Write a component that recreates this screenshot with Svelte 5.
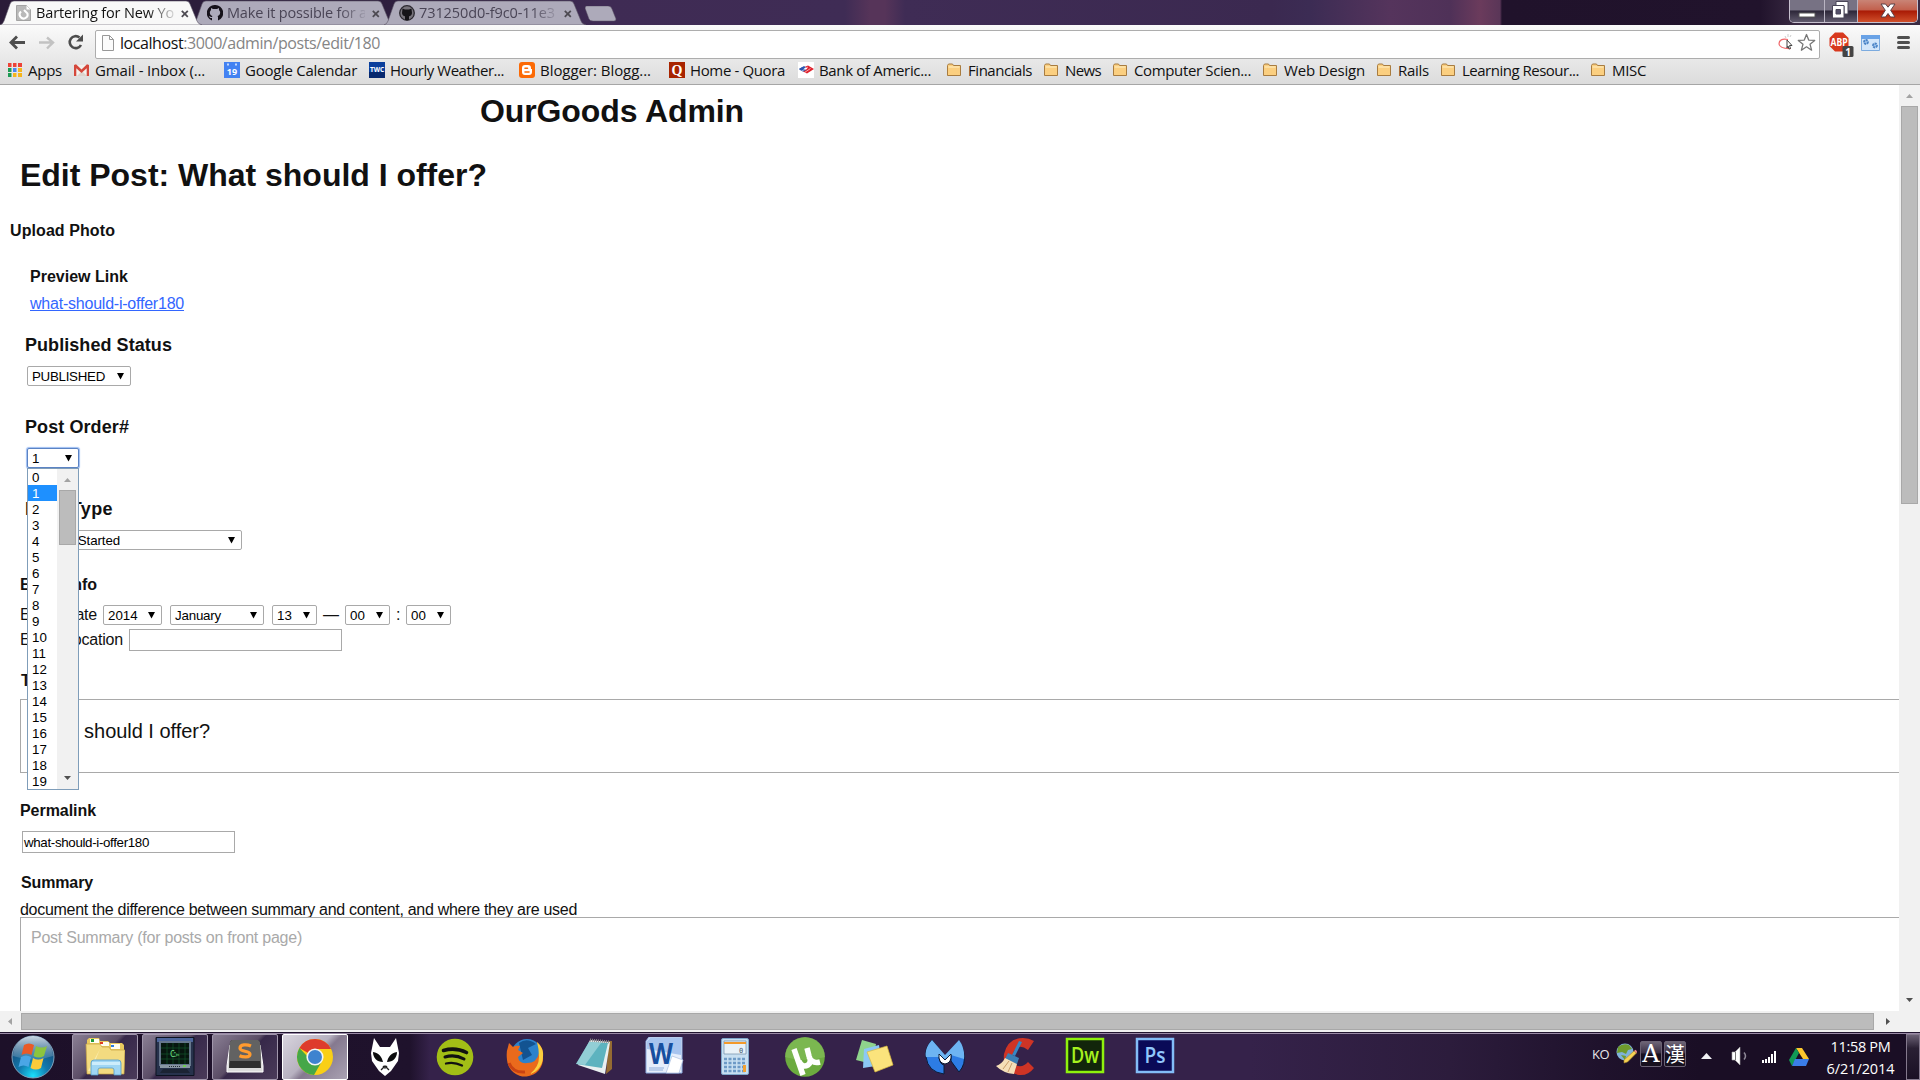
<script>
  // Spreads a label's letters so that it takes exactly the given width.
  function fit(node, width) {
    if (!width) return;
    const natural = node.getBoundingClientRect().width;
    node.style.letterSpacing = (width - natural) / node.textContent.length + 'px';
  }

  const tabs = [
    { title: 'Bartering for New Yo', w: 138, icon: 'page', active: true },
    { title: 'Make it possible for a', w: 140, icon: 'github' },
    { title: '731250d0-f9c0-11e3', w: 136, icon: 'octo' }
  ];

  const bookmarks = [
    { label: 'Apps', icon: 'apps', slot: 66, w: 34 },
    { label: 'Gmail - Inbox (...', icon: 'gmail', slot: 150, w: 110 },
    { label: 'Google Calendar', icon: 'cal', slot: 145, w: 112 },
    { label: 'Hourly Weather...', icon: 'twc', slot: 150, w: 114 },
    { label: 'Blogger: Blogg...', icon: 'blogger', slot: 150, w: 111 },
    { label: 'Home - Quora', icon: 'quora', slot: 129, w: 95 },
    { label: 'Bank of Americ...', icon: 'bofa', slot: 149, w: 112 },
    { label: 'Financials', icon: 'folder', slot: 97, w: 64 },
    { label: 'News', icon: 'folder', slot: 69, w: 36 },
    { label: 'Computer Scien...', icon: 'folder', slot: 150, w: 117 },
    { label: 'Web Design', icon: 'folder', slot: 114, w: 81 },
    { label: 'Rails', icon: 'folder', slot: 64, w: 31 },
    { label: 'Learning Resour...', icon: 'folder', slot: 150, w: 117 },
    { label: 'MISC', icon: 'folder', slot: 70, w: 34 }
  ];

  const orders = Array.from({ length: 20 }, (_, i) => i);

  const taskbar = [
    { id: 'explorer', state: 'open' },
    { id: 'terminal', state: 'open' },
    { id: 'sublime', state: 'open' },
    { id: 'chrome', state: 'open focus' },
    { id: 'foobar' }, { id: 'spotify' }, { id: 'firefox' }, { id: 'notepad' },
    { id: 'word' }, { id: 'calc' }, { id: 'utorrent' }, { id: 'sticky' },
    { id: 'malware' }, { id: 'ccleaner' }, { id: 'dw' }, { id: 'ps' }
  ];
</script>

{#snippet select(cls, value, w)}
  <div class="select {cls}">
    <span use:fit={w}>{value}</span>
    <svg class="arrow" width="7" height="7" viewBox="0 0 7 7"><path d="M0 0h7L3.500 6.500z" /></svg>
  </div>
{/snippet}

{#snippet small(icon)}
  <svg class="ico" width="16" height="16" viewBox="0 0 16 16">
    {#if icon === 'apps'}
      <path fill="#ed4337" d="M0 1h4v4H0zM5 1h4v4H5zM10 1h4v4h-4z" />
      <path fill="#1e9b54" d="M0 6h4v4H0z" /><path fill="#4a87ee" d="M5 6h4v4H5z" /><path fill="#f5b51c" d="M10 6h4v4h-4z" />
      <path fill="#1e9b54" d="M0 11h4v4H0z" /><path fill="#f5b51c" d="M5 11h4v4H5zM10 11h4v4h-4z" />
      <path stroke="#e6e6e6" d="M4 0v16M9 0v16M0 5.500h16M0 10.500h16" />
    {:else if icon === 'gmail'}
      <path fill="#f3f1ee" d="M1 3h13v11H1z" /><path fill="#ddd3cd" d="M3 14l5-5 5 5z" />
      <path fill="#d5483c" d="M0 3l2-.8 5.500 5.200 5.500-5.200 2 .8v11h-2.300V6.300L7.500 11 2.300 6.300V14H0z" />
    {:else if icon === 'cal'}
      <path fill="#4382f2" d="M0 0h16v16H0z" /><path fill="#c4d8fc" d="M3 1.500h2v2H3zM11 1.500h2v2h-2z" />
      <text x="8" y="12.500" font-size="9" font-weight="bold" text-anchor="middle" fill="#fff">19</text>
    {:else if icon === 'twc'}
      <path fill="#0b3f9c" d="M0 0h16v16H0z" /><path fill="#06286f" d="M0 10h16v6H0z" />
      <text x="8" y="10" font-size="6.500" font-weight="bold" text-anchor="middle" fill="#fff">TWC</text>
    {:else if icon === 'blogger'}
      <rect width="16" height="16" rx="3" fill="#fc6a05" />
      <path fill="#fff" d="M3 6a3 3 0 0 1 3-3h3a3 3 0 0 1 3 3v1h1v3a3 3 0 0 1-3 3H6a3 3 0 0 1-3-3z" />
      <path stroke="#fc6a05" stroke-width="1.600" stroke-linecap="round" d="M6 6.200h2.500M6 10h4" />
    {:else if icon === 'quora'}
      <path fill="#a82400" d="M0 0h16v16H0z" />
      <text x="8" y="13" font-size="14" font-weight="bold" text-anchor="middle" fill="#fff" class="serif">Q</text>
    {:else if icon === 'bofa'}
      <path fill="#fff" d="M0 0h16v16H0z" />
      <path fill="#2d57b0" d="M1 7l5-3 2 1.200-5 3.200z" /><path fill="#e0222d" d="M7 4.800l3-1.300 6 3.500-7 4.500-4-2 4.500-3z" />
      <path fill="#2d57b0" d="M1 7l3-1.700 4 2.700-3 1.800z" />
      <path stroke="#fff" stroke-width=".6" d="M4 9l6-4M6.500 10.500l6-4" />
    {:else if icon === 'folder'}
      <path d="M.5 13.500v-10l1-1.500h4l1 1.500h7v10z" fill="#fbcf80" stroke="#a87c40" />
      <path d="M1.500 5h11" stroke="#fff0c4" />
    {:else if icon === 'page'}
      <path d="M.5.500h10l4 4v11H.5z" fill="#b9b9b9" stroke="#a3a3a3" /><path d="M10.500.500l4 4h-4z" fill="#fff" />
      <path d="M5 6.500a4 4 0 1 0 6.500 2L8 5" fill="none" stroke="#fff" stroke-width="2" />
    {:else if icon === 'github'}
      <path fill="#16121a" d="M8 0a8 8 0 0 0-3 15.500V13c-2 .4-2.500-.8-3-2 1.300 0 1.500 1.300 3 1l.4-1C3.500 10.500 2.700 9 2.900 6.800L4 4.900 4 3l2 .9h4L12 3v1.900l1.100 1.900c.2 2.200-.6 3.700-2.500 4.200l.4 1v3.500A8 8 0 0 0 8 0z" />
    {:else if icon === 'octo'}
      <circle cx="8" cy="8" r="7.300" fill="#77737b" stroke="#2c2930" stroke-width="1.300" />
      <path fill="#151317" d="M3.500 3.500l2.500 1h4l2.500-1 .5 4.500c0 2-1.500 3-3 3.200V15H6v-3.800C4.500 11 3 10 3 8z" />
    {/if}
  </svg>
{/snippet}

{#snippet app(id)}
  <svg width="40" height="40" viewBox="0 0 40 40">
    {#if id === 'explorer'}
      <path d="M2 7V3l2-2h10l1 3h8l2 2h12l2 2v28H2z" fill="#e9c95e" />
      <path d="M5 2h9v4H5zM15 5h9v4h-9zM26 7h9v5h-9z" fill="#fffdf0" />
      <path d="M6 2h3v3H6z" fill="#1d9b38" /><path d="M15 5h3v2h-3z" fill="#e13b22" /><path d="M26 8h3v2h-3z" fill="#2a7ce0" />
      <path d="M1 7h14l2 3h7l2 3h14l-1 24H2z" fill="#f3db80" stroke="#c7a544" stroke-width=".7" />
      <path d="M3 34L15 12l-9 22z" fill="#fdf3bc" opacity=".7" />
      <path d="M6 26q0-3 3-3h24q3 0 3 3v12h-7v-5q0-2-2-2H15q-2 0-2 2v5H6z" fill="#9fd6f3" stroke="#539cc9" stroke-width=".8" />
      <path d="M7 25h28v3H7z" fill="#d8f2fd" opacity=".8" />
    {:else if id === 'terminal'}
      <path d="M1 .5h38v38H1z" fill="#27324c" stroke="#0c1220" />
      <path d="M2 1h36v4H2z" fill="#4d659b" /><path d="M4 4h32v25H4z" fill="#66768c" /><path d="M6 6h28v21H6z" fill="#07160f" />
      <path d="M12 6v21M18 6v21M24 6v21M30 6v21M6 11h28M6 17h28M6 22h28" stroke="#12532c" stroke-width=".7" />
      <text x="15" y="20" font-size="8" fill="#6ee387" class="mono" textLength="10">C:▹</text>
      <path d="M5 28h30v3H5z" fill="#8996a3" /><path d="M14 29.500h12" stroke="#242d38" stroke-dasharray="1 1" /><path d="M28 29h3" stroke="#6adc3d" stroke-width="1.500" />
      <path d="M8 32h24l3 4H5z" fill="#1b2333" />
    {:else if id === 'sublime'}
      <path d="M2 29L5 8h30l3 21v6H2z" fill="#dcdcdc" stroke="#fff" />
      <path d="M7 3h26l2 2 1 26H4L5 5z" fill="#303030" /><path d="M7 3h26l2 2 1 19H4L5 5z" fill="#626262" />
      <path d="M26 9c-4-1.800-11-1.800-11 2.200 0 4 10 2 10 6 0 3.600-7 3.200-10.500 1.500" fill="none" stroke="#ff9b2e" stroke-width="3.200" />
    {:else if id === 'chrome'}
      <circle cx="20" cy="20" r="18" fill="#f9cf16" />
      <path d="M20 20L4.400 11A18 18 0 0 1 36 12H20z" fill="#de3b2c" />
      <path d="M20 20h-7L4.400 11A18 18 0 0 0 19 38l8-14z" fill="#45a748" />
      <circle cx="20" cy="20" r="8.600" fill="#f4f6f4" /><circle cx="20" cy="20" r="7" fill="#3e83cf" />
    {:else if id === 'foobar'}
      <path d="M9 1l6 9h10l6-9 3 15-1 8-7 10-6 5-6-5-7-10-1-8z" fill="#fff" />
      <path d="M8 15c6 1 9 5 10 10-6 0-10-4-10-10zM32 15c-6 1-9 5-10 10 6 0 10-4 10-10z" fill="#0c0c0e" />
      <path d="M16 33l4-4 4 4M18 29l2 2 2-2" fill="none" stroke="#222" stroke-width="1.300" />
    {:else if id === 'spotify'}
      <circle cx="20" cy="20" r="18.300" fill="#a2be16" />
      <g fill="none" stroke="#111" stroke-linecap="round"><path d="M8.500 13.500q12-3.500 23 2" stroke-width="3.600" /><path d="M10 20q10-3 19 2" stroke-width="3" /><path d="M11 26.500q8-2 16 2" stroke-width="2.300" /></g>
    {:else if id === 'firefox'}
      <circle cx="22" cy="18" r="16" fill="#2c82cc" /><path d="M14 6q8-6 17 1l-8 4 4 7-9 5z" fill="#135391" />
      <path d="M3 10l1-4 4 4q3-2 7-1l-2 4 5 3-5 4q1 7 9 6 10 0 12-10 1-6-2-11 7 6 6 15A18 18 0 0 1 2 23Q1 15 3 10z" fill="#ea6a1c" />
      <path d="M32 5q7 6 6 15a18 18 0 0 1-13 17q9-7 9-17 0-8-2-15z" fill="#fbce3e" />
      <path d="M4 26q4 10 16 9" fill="none" stroke="#c94212" stroke-width="3" />
    {:else if id === 'notepad'}
      <path d="M34 4h3v28l-6 5z" fill="#946b32" /><path d="M15 3l20 2-5 32-27-9z" fill="#e9f0f0" />
      <path d="M14 5l19 1-6 25L1 27z" fill="#5db3bf" /><path d="M14 5l12 1L10 28l-9-1z" fill="#b6e0e4" opacity=".6" />
      <path d="M15 3l20 2" stroke="#8c8c8c" stroke-width="3" stroke-dasharray="1 1" />
    {:else if id === 'word'}
      <path d="M1 4l3-4h33v36H1z" fill="#e6eefb" stroke="#8cabdf" /><path d="M2 4l3-3h31v17L2 12z" fill="#a7c4ef" />
      <text x="4" y="27" font-size="29" font-weight="bold" fill="#174f9f" textLength="24" lengthAdjust="spacingAndGlyphs">W</text>
      <path d="M27 19l11 4-4 13H21z" fill="#fff" stroke="#a9bddf" stroke-width=".7" /><path d="M4 31h15M4 33h14" stroke="#90add9" />
    {:else if id === 'calc'}
      <rect x="6.500" y="1.500" width="27" height="36" rx="1.500" fill="#c7dff1" stroke="#7fa7ca" />
      <path d="M9 4h22v13H9z" fill="#e9f2f8" stroke="#718ea8" stroke-width=".7" /><path d="M9 5h22v2H9z" fill="#f39a2b" />
      <text x="24" y="16" font-size="7" fill="#41566b" class="mono">0</text>
      <path d="M9 22h22M9 26h22M9 30h22M9 34h22" stroke="#6d9ac6" stroke-width="2.400" stroke-dasharray="3 1.500" /><path d="M28 28h3v7h-3z" fill="#f2a233" />
    {:else if id === 'utorrent'}
      <circle cx="20" cy="20" r="19.800" fill="#6cab3f" /><path d="M0 20a20 20 0 0 1 40 0q-20 6-40 0z" fill="#86bf5b" opacity=".6" />
      <path d="M9 12l9 26M14 24q3 7 9 4 4-3 1-9l-2-8M24 20q3 7 11 5" fill="none" stroke="#fff" stroke-width="5.500" />
    {:else if id === 'sticky'}
      <path d="M7 3l14 4-4 20-16-4z" fill="#8fd48c" /><path d="M9 12l15-4 3 20-19 3z" fill="#8cc8f5" />
      <path d="M12 15l20-6 6 19-18 7z" fill="#fbe37c" stroke="#d9b93e" stroke-width=".7" />
    {:else if id === 'malware'}
      <path d="M7 3Q-1 12 1 20q2 15 18 17V28q-5-1-5-10l6 5 6-5v6l8 11q7-8 5-18-1-8-5-13l-14 15z" fill="#2d7ce4" stroke="#0b1c38" />
      <path d="M7 3Q-1 12 1 20h12l7 2 6-4 13 4Q40 11 34 3L20 18z" fill="#6db4f2" />
      <path d="M14 17l6 6 6-6q1 9-6 10-7-1-6-10z" fill="#fff" stroke="#0b1c38" />
    {:else if id === 'ccleaner'}
      <path d="M39 4L33 13Q24 6 19 14q-6 12 4 15 6 1 10-4l6 6q-6 8-15 7Q7 34 9 17 13 1 28 1q6 0 11 3z" fill="#cf3425" />
      <path d="M24 4l3 1-7 14-3-1z" fill="#3787c4" /><path d="M13 16l11 5-2 6-12-5z" fill="#3c7fb4" />
      <path d="M10 21l12 6q-2 6-3 10Q8 36 1 29q6-2 9-8z" fill="#f5dfb8" /><path d="M8 32l6-8M13 35l4-9" stroke="#c99d69" />
    {:else if id === 'dw' || id === 'ps'}
      <rect x="2" y="2" width="36" height="33" class={id} stroke-width="2.500" />
      <text x="20" y="26" font-size="21" font-weight="600" text-anchor="middle" textLength={id === 'dw' ? 28 : 21} lengthAdjust="spacingAndGlyphs" fill={id === 'dw' ? '#a6f21e' : '#90c6fb'}>{id === 'dw' ? 'Dw' : 'Ps'}</text>
    {/if}
  </svg>
{/snippet}

<div class="screen">
  <header class="tabstrip">
    {#each tabs as tab}
      <div class="tab" class:active={tab.active}>
        <svg class="shape" width="206" height="25" viewBox="0 0 206 25">
          <path d="M0 25Q3 24 4 21L10 4Q11 1 14 1H186Q189 1 190 4L197 21Q198 24 202 25z" />
        </svg>
        {@render small(tab.icon)}
        <span class="name"><span use:fit={tab.w}>{tab.title}</span></span>
        <svg class="x" width="8" height="8" viewBox="0 0 8 8"><path d="M.8.8l6 6m0-6l-6 6" /></svg>
      </div>
    {/each}
    <svg class="newtab" width="32" height="16" viewBox="0 0 32 16"><path d="M1 0h22q3 0 4 3l4 10q0 2-2 2H8q-3 0-4-2L0 2z" /></svg>
    <div class="controls">
      <div class="min"><svg width="18" height="6" viewBox="0 0 18 6"><path d="M1 1h16v4H1z" fill="#fff" stroke="#555" /></svg></div>
      <div class="max"><svg width="18" height="18" viewBox="0 0 18 18"><path d="M5 .5h12v12.500h-4V5H5z" fill="#fff" stroke="#4a4658" /><path d="M1.500 4.500h11.500v12.500H1.500z" fill="#fff" stroke="#4a4658" /><path d="M5 8.500h4.500v4.500H5z" fill="#55516a" stroke="#4a4658" /></svg></div>
      <div class="close"><svg width="16" height="15" viewBox="0 0 16 15"><path d="M1 1h4.500L8 4.200 10.500 1H15l-4.300 6.300L15 14h-4.500L8 10.500 5.500 14H1l4.300-6.700z" fill="#fff" stroke="#5b4046" /></svg></div>
    </div>
  </header>

  <div class="toolbar">
    <svg width="95" height="34" viewBox="0 0 95 34" fill="none">
      <path d="M17 11.500l-6 6 6 6M11 17.500h14" stroke="#4d4d4d" stroke-width="2.800" />
      <path d="M47 12.500l6 5-6 6M53 17.500H39" stroke="#c2c2c2" stroke-width="2.400" />
      <path d="M81 20a6 6 0 1 1-1.500-7.500" stroke="#4d4d4d" stroke-width="2.600" /><path d="M83 9.500v7h-7z" fill="#4d4d4d" />
    </svg>
    <div class="omnibox">
      <svg width="12" height="16" viewBox="0 0 12 16"><path d="M.5.500h7l4 4v11H.5zM7.500.500v4h4" fill="#fbfbfb" stroke="#989898" /></svg>
      <span class="url" use:fit={260}><b>localhost</b>:3000/admin/posts/edit/180</span>
      <svg class="pick" width="17" height="18" viewBox="0 0 17 18"><path d="M10 5.500Q1 4 1 10q1 5 12 4.500" fill="none" stroke="#f0686b" stroke-width="1.200" /><path d="M7 2l1 2M10 0v3M13 1l-1 2" stroke="#ccc" /><path d="M9 6l5 5.500h-2.500l1 3-1.500.500-1-3L9 14z" fill="#fff" stroke="#444" /></svg>
      <svg width="19" height="19" viewBox="0 0 19 19"><path d="M9.500 1.500l2.200 5.600 6 .3-4.700 3.800 1.600 6-5.100-3.400-5.100 3.400 1.600-6L1.300 7.400l6-.3z" fill="#fff" stroke="#777" stroke-width="1.300" stroke-linejoin="round" /></svg>
    </div>
    <svg class="ext" width="100" height="34" viewBox="0 0 100 34">
      <path d="M15 7.500h8l5.500 5.500v8L23 26.500h-8L9.500 21v-8z" fill="#d8391e" />
      <text x="19" y="20.500" font-size="10.500" font-weight="bold" text-anchor="middle" textLength="17" lengthAdjust="spacingAndGlyphs" fill="#fff">ABP</text>
      <rect x="22.500" y="21" width="11" height="11" rx="1.500" fill="#444" /><text x="28" y="30.500" font-size="10" font-weight="bold" text-anchor="middle" fill="#fff">1</text>
      <path d="M41.500 10.500h18v15h-18z" fill="#d3e6fa" stroke="#7cabdf" /><path d="M41 10h19v4H41z" fill="#69a2e6" />
      <circle cx="46" cy="17" r="2" fill="#9bc0ea" stroke="#4b84c6" stroke-width="1.800" stroke-dasharray="2 .7" /><circle cx="55" cy="20.500" r="2" fill="#9bc0ea" stroke="#4b84c6" stroke-width="1.800" stroke-dasharray="2 .7" />
      <path d="M78.500 12.500h10M78.500 17.500h10M78.500 22.500h10" stroke="#505050" stroke-width="3" stroke-linecap="round" />
    </svg>
  </div>

  <nav class="bookmarks">
    {#each bookmarks as b}
      <div class="bookmark" style:width="{b.slot}px">
        {@render small(b.icon)}<span use:fit={b.w}>{b.label}</span>
      </div>
    {/each}
  </nav>

  <div class="viewport">
    <main>
      <h1 class="brand"><span use:fit={264}>OurGoods Admin</span></h1>
      <h1><span use:fit={467}>Edit Post: What should I offer?</span></h1>
      <h4 class="upload"><span use:fit={105}>Upload Photo</span></h4>
      <h4 class="preview"><span use:fit={98}>Preview Link</span></h4>
      <div class="link"><a href="#preview" use:fit={154}>what-should-i-offer180</a></div>

      <h3 class="status"><span use:fit={147}>Published Status</span></h3>
      {@render select('published', 'PUBLISHED', 73)}
      <h3><span use:fit={104}>Post Order#</span></h3>
      <div class="combo">
        {@render select('order', '1')}
        <div class="popup">
          <ul>
            {#each orders as n}<li class:picked={n === 1}>{n}</li>{/each}
          </ul>
          <div class="mini-bar">
            <svg width="7" height="4" viewBox="0 0 7 4"><path d="M0 4h7L3.500 0z" fill="#a3a3a3" /></svg>
            <div class="mini-thumb"></div>
            <svg class="down" width="7" height="4" viewBox="0 0 7 4"><path d="M0 0h7L3.500 4z" fill="#505050" /></svg>
          </div>
        </div>
      </div>
      <h3><span use:fit={88}>Post Type</span></h3>
      {@render select('type', 'Getting Started', 88)}

      <h4 class="event"><span use:fit={77}>Event Info</span></h4>
      <div class="row date">
        <span class="lab" use:fit={77}>Event Date</span>
        {@render select('year', '2014')}
        {@render select('month', 'January', 46)}
        {@render select('two', '13')}
        <span class="dash">—</span>
        {@render select('two', '00')}
        <span class="colon">:</span>
        {@render select('two', '00')}
      </div>
      <div class="row place">
        <span class="lab" use:fit={103}>Event Location</span>
        <div class="input"></div>
      </div>

      <h4 class="title"><span>Title</span></h4>
      <div class="area heading"><span use:fit={178}>What should I offer?</span></div>
      <h4 class="perma"><span use:fit={76}>Permalink</span></h4>
      <div class="input perma-input"><span use:fit={125}>what-should-i-offer180</span></div>
      <h4 class="summary"><span use:fit={72}>Summary</span></h4>
      <p><span use:fit={557}>document the difference between summary and content, and where they are used</span></p>
      <div class="area text"><span use:fit={271}>Post Summary (for posts on front page)</span></div>
    </main>
    <div class="vbar">
      <svg width="7" height="4" viewBox="0 0 7 4"><path d="M0 4h7L3.500 0z" fill="#a3a3a3" /></svg>
      <div class="vthumb"></div>
      <svg class="down" width="7" height="4" viewBox="0 0 7 4"><path d="M0 0h7L3.500 4z" fill="#505050" /></svg>
    </div>
  </div>
  <div class="hbar">
    <svg width="4" height="7" viewBox="0 0 4 7"><path d="M4 0v7L0 3.500z" fill="#a3a3a3" /></svg>
    <div class="hthumb"></div>
    <svg width="4" height="7" viewBox="0 0 4 7"><path d="M0 0v7l4-3.500z" fill="#505050" /></svg>
  </div>

  <footer class="taskbar">
    <svg class="start" width="44" height="44" viewBox="0 0 44 44">
      <defs>
        <radialGradient id="orb" cx=".5" cy=".95" r=".9"><stop offset="0" stop-color="#19dffc" /><stop offset=".4" stop-color="#1279ad" /><stop offset="1" stop-color="#173f6c" /></radialGradient>
        <linearGradient id="shine" x2="0" y2="1"><stop offset="0" stop-color="#dfeaf2" stop-opacity=".9" /><stop offset="1" stop-color="#8fb0c8" stop-opacity=".25" /></linearGradient>
      </defs>
      <circle cx="22" cy="22" r="21" fill="url(#orb)" stroke="#7fa3bd" />
      <path d="M2 21a20 20 0 0 1 40 0q-20 7-40 0z" fill="url(#shine)" />
      <path d="M13 10q5-3 10 0l-2.500 10q-5-3-10 0z" fill="#ea5a27" /><path d="M25 11q6 3 11 0l-3 10q-5 3-10.500 0z" fill="#8cc43e" />
      <path d="M10 22q5-3 10 0l-2.500 10q-5-3-10 0z" fill="#4aa6e6" /><path d="M22 23q5 3 10.500 0L30 33q-5 3-10.500 0z" fill="#fccb3a" />
    </svg>
    {#each taskbar as t}
      <div class="task {t.state ?? ''}">{@render app(t.id)}</div>
    {/each}
    <div class="tray">
      <span class="lang" use:fit={17}>KO</span>
      <svg class="globe" width="21" height="21" viewBox="0 0 21 21"><circle cx="9" cy="9" r="8.500" fill="#7fb2d8" /><path d="M2 4q5-4 11-2l3 4-4 1-2 4-4-2-5 1zM5 12l5 1-1 4z" fill="#6f9a2c" /><path d="M8 17L18 8l2.500 2-9 9-3.500 1z" fill="#f5d254" stroke="#a88428" stroke-width=".6" /><path d="M18 8l1.500-1.300 2 2-1 1.300z" fill="#f08a86" /></svg>
      <div class="ime latin"><span>A</span></div>
      <div class="ime han"><span>漢</span></div>
      <svg class="up" width="11" height="6" viewBox="0 0 11 6"><path d="M0 6l5.500-6L11 6z" fill="#f2f2f6" /></svg>
      <svg class="vol" width="17" height="20" viewBox="0 0 17 20"><path d="M1 6h3l5-5v18l-5-5H1z" fill="#fff" stroke="#aaa" stroke-width=".6" /><path d="M4.500 6v8" stroke="#777" /><path d="M13 6.500q3 3.500 0 7" fill="none" stroke="#8d8796" stroke-width="1.500" /></svg>
      <svg class="net" width="15" height="13" viewBox="0 0 15 13"><path fill="#fff" d="M0 9h2v3H0zM3 8h2v4H3zM6 6h2v6H6zM9 3h2v9H9zM12 0h2v12h-2z" /></svg>
      <svg class="drive" width="20" height="18" viewBox="0 0 20 18"><path d="M7 0h6l7 11h-6z" fill="#fbc72e" /><path d="M7 0l3 5-7 13-3-6z" fill="#119a56" /><path d="M6 11h14l-3 7H3z" fill="#3a7de8" /></svg>
      <div class="clock"><span use:fit={60}>11:58 PM</span><span use:fit={68}>6/21/2014</span></div>
      <div class="peek"></div>
    </div>
  </footer>
</div>

<style>
  :global(body) { background: #fff; overflow: hidden; }
  .screen { width: 1920px; height: 1080px; display: flex; flex-direction: column; overflow: hidden; background: #fff; color: #111; font-family: "Liberation Sans", Arial, sans-serif; }
  svg { display: block; flex: none; }
  span, a { white-space: pre; }
  svg text { font-family: "Open Sans", "Noto Sans", sans-serif; }
  svg .serif { font-family: "Liberation Serif", serif; }
  svg .mono { font-family: "DejaVu Sans Mono", monospace; }

  .tabstrip { height: 25px; flex: none; display: flex; background: linear-gradient(90deg, #2a1b38 0, #2f2040 500px, #3f2b54 600px, #3f2c55 845px, #563459 870px, #563459 885px, #3f2c55 905px, #3b2950 1270px, #3c2c54 1310px, #55345c 1390px, #4f3158 1450px, #6b3b5c 1480px, #5a3658 1500px, #20122b 1502px, #21132c 1760px, #3a2b43 1800px); font-family: "Open Sans", sans-serif; }
  .tab { width: 193px; flex: none; position: relative; display: flex; align-items: center; box-sizing: border-box; padding: 1px 0 0 15px; gap: 4px; font-size: 14.500px; color: #4a4556; z-index: 1; }
  .tab:first-child { width: 192px; z-index: 2; padding-left: 16px; color: #111; }
  .tab:nth-child(3) { margin-left: -1px; }
  .tab > :global(*) { position: relative; }
  .tab .shape { position: absolute; left: 0; top: 0; fill: #adaaba; stroke: #5d5567; stroke-width: .6; }
  .active .shape { fill: #f8f8f8; }
  .name { width: 138px; overflow: hidden; line-height: 22px; mask-image: linear-gradient(90deg, #000 112px, transparent 142px); }
  .x { stroke: #4d4a52; stroke-width: 1.800; margin-left: 3px; margin-top: 2px; }
  .newtab { margin: 6px 0 0 8px; fill: #adaaba; stroke: #5d5567; stroke-width: .5; }
  .controls { margin-left: auto; margin-right: 2px; display: flex; height: 22px; border: 1px solid #c7c1cf; border-top: 0; border-radius: 0 0 5px 5px; overflow: hidden; }
  .controls div { display: flex; justify-content: center; }
  .min { width: 34px; background: linear-gradient(#777284 0 45%, #2d2739 50%, #605a6d); border-right: 1px solid #b9b4c2; }
  .min svg { margin-top: 12px; }
  .max { width: 32px; background: linear-gradient(#777284 0 45%, #2d2739 50%, #605a6d); border-right: 1px solid #b9b4c2; }
  .max svg { margin-top: 1px; margin-right: 2px; }
  .close { width: 59px; background: linear-gradient(#c98476 0, #c2604d 45%, #a91a05 50%, #d04f2b); }
  .close svg { margin-top: 3px; }

  .toolbar { height: 34px; flex: none; padding-bottom: 1px; display: flex; background: linear-gradient(#fafafa, #e8e8e8); font-family: "Open Sans", sans-serif; }
  .omnibox { box-sizing: border-box; width: 1726px; height: 29px; margin-top: 5px; border: 1px solid #adadad; border-radius: 2px; background: #fff; display: flex; align-items: center; padding: 0 3px 4px 6px; }
  .url { font-size: 16px; line-height: 26px; color: #858585; margin-left: 6px; }
  .url b { font-weight: 400; color: #111; }
  .pick { margin-left: auto; margin-right: 4px; position: relative; left: 2px; }
  .bookmarks { box-sizing: border-box; height: 25px; flex: none; display: flex; align-items: center; padding: 0 0 4px 8px; background: linear-gradient(#e8e8e8, #dcdcdc); border-bottom: 1px solid #a6a6a6; font: 15px/20px "Open Sans", sans-serif; }
  .bookmark { flex: none; display: flex; align-items: center; gap: 5px; color: #111; }
  .bookmark:first-child { gap: 4px; }

  .viewport { height: 926px; flex: none; display: flex; }
  main { width: 1899px; overflow: hidden; padding-top: 7px; box-sizing: border-box; }
  h1, h3, h4, p { margin: 0; }
  h1 { font-size: 32px; line-height: 38px; height: 36px; margin: 28px 0 0 20px; }
  .brand { margin: 0 0 0 480px; }
  h4 { font-size: 16px; line-height: 22px; height: 20px; margin-left: 20px; }
  h3 { font-size: 18px; line-height: 20px; height: 20px; margin: 31px 0 0 25px; }
  .upload { margin: 28px 0 0 10px; }
  .preview { margin: 26px 0 0 30px; }
  .link { height: 20px; margin: 7px 0 0 30px; line-height: 22px; font-size: 16px; }
  .link a { color: #36f; }
  .status { margin-top: 22px; }
  .select { box-sizing: border-box; height: 20px; border: 1px solid #a9a9a9; border-radius: 2px; background: #fff; display: flex; align-items: center; justify-content: space-between; padding: 2px 6px 0 4px; font-size: 13.333px; line-height: 18px; color: #000; flex: none; }
  .select .arrow { margin-top: -2px; }
  .published { width: 104px; margin: 11px 0 0 27px; }
  .combo { position: relative; margin: 11px 0 0 27px; width: 52px; }
  .order { border-color: #5b83c4; box-shadow: 0 0 1px 1px #9dbdf2; }
  .popup { position: absolute; left: 0; top: 20px; width: 52px; height: 322px; box-sizing: border-box; border: 1px solid #7f9db9; background: #fff; display: flex; z-index: 3; }
  ul { list-style: none; margin: 0; padding: 0; width: 29px; font-size: 13.333px; line-height: 18px; color: #000; }
  li { height: 16px; padding-left: 4px; }
  .picked { background: #1e90ff; color: #fff; }
  .mini-bar { flex: 1; background: #f1f1f1; display: flex; flex-direction: column; align-items: center; padding-top: 9px; box-sizing: border-box; }
  .mini-thumb { width: 17px; height: 55px; box-sizing: border-box; margin-top: 8px; background: #bcbcbc; border: 1px solid #a8a8a8; }
  .down { margin-top: auto; }
  .mini-bar .down { margin-bottom: 9px; }
  .type { width: 215px; margin: 11px 0 0 27px; }
  .event { margin-top: 24px; }
  .row { display: flex; margin-left: 20px; font-size: 16px; line-height: 20px; }
  .date { margin-top: 11px; height: 20px; }
  .year { width: 59px; margin-left: 6px; }
  .month { width: 94px; margin: 0 8px; }
  .two { width: 45px; }
  .dash { width: 16px; margin: 0 6px; }
  .colon { width: 4px; margin: 0 6px; }
  .place { margin-top: 4px; height: 22px; line-height: 22px; }
  .input { box-sizing: border-box; width: 213px; height: 22px; border: 1px solid #a9a9a9; background: #fff; margin-left: 6px; font-size: 13.333px; line-height: 21px; color: #000; padding-left: 1px; }
  .title { margin-top: 19px; padding-left: 1px; }
  .area { box-sizing: border-box; width: 1900px; border: 1px solid #a9a9a9; margin-left: 20px; }
  .heading { margin-top: 9px; height: 74px; padding: 19px 0 0 11px; font-size: 20px; line-height: 24px; }
  .perma { margin-top: 27px; }
  .perma-input { margin: 11px 0 0 22px; }
  .summary { margin: 19px 0 0 21px; }
  p { height: 18px; overflow: hidden; margin: 7px 0 0 20px; font-size: 16px; line-height: 22px; }
  .text { height: 110px; padding: 9px 0 0 10px; font-size: 16px; line-height: 22px; color: #a9a9a9; }
  .vbar { width: 21px; background: #f1f1f1; display: flex; flex-direction: column; align-items: center; padding-top: 9px; box-sizing: border-box; }
  .vthumb { width: 17px; height: 398px; box-sizing: border-box; margin-top: 8px; background: #bcbcbc; border: 1px solid #a8a8a8; }
  .vbar .down { margin-bottom: 9px; }
  .hbar { height: 21px; flex: none; background: #f1f1f1; display: flex; align-items: center; padding-left: 8px; }
  .hthumb { width: 1853px; height: 17px; box-sizing: border-box; margin: 0 12px 0 9px; background: #bcbcbc; border: 1px solid #a8a8a8; }

  .taskbar { height: 48px; box-sizing: border-box; border-top: 1px solid #21152f; box-shadow: inset 0 1px #9a8aa6; display: flex; padding-left: 11px; background: linear-gradient(90deg, #1d1029 0, #1f122c 410px, #35224a 430px, #35224a 1250px, #2c1c3c 1450px, #1f122c 1600px, #1a0e25 1700px); }
  .start { margin: 2px 15px 0 0; }
  .task { flex: none; width: 66px; height: 46px; box-sizing: border-box; margin: 1px 2px 0; display: flex; align-items: center; justify-content: center; border: 1px solid transparent; border-radius: 2px; padding-bottom: 1px; }
  .open { border-color: #a197ac; background: linear-gradient(135deg, #8a7f94 0, #5b4d66 45%, #37284a 50%, #4a3b59); }
  .focus { border-color: #fff; background: linear-gradient(135deg, #d9d5de 0, #b7b1c0 45%, #85798f 55%, #aaa2b3); }
  .dw { fill: #12260b; stroke: #8ff20d; }
  .ps { fill: #0a0a57; stroke: #83bdf8; }
  .tray { margin-left: auto; display: flex; color: #fff; font-family: "Open Sans", sans-serif; align-items: flex-start; }
  .lang { font-size: 13px; line-height: 18px; margin-top: 12px; color: #e8e6ea; }
  .globe { margin: 10px 2px 0 7px; }
  .ime { width: 22px; height: 26px; box-sizing: border-box; margin: 8px 1px 0; border: 1px solid #6a6173; border-radius: 2px; background: linear-gradient(#6d6476, #3a2f44 45%, #17101e 50%); display: flex; align-items: center; justify-content: center; }
  .latin { font: 24px/24px "DejaVu Serif", serif; }
  .han { font: 20px/24px "Noto Sans CJK TC", "Noto Sans CJK SC", sans-serif; }
  .up { margin: 20px 0 0 14px; }
  .vol { margin: 13px 0 0 19px; }
  .net { margin: 18px 0 0 14px; }
  .drive { margin: 15px 0 0 12px; }
  .clock { width: 75px; margin: 3px 0 0 14px; display: flex; flex-direction: column; align-items: center; font-size: 14.500px; line-height: 22px; }
  .peek { width: 14px; height: 46px; box-sizing: border-box; margin: 1px 0 0 8px; border: 1px solid #84798d; background: linear-gradient(#6b6175, #2a2034 30%, #1a1024); }
</style>
